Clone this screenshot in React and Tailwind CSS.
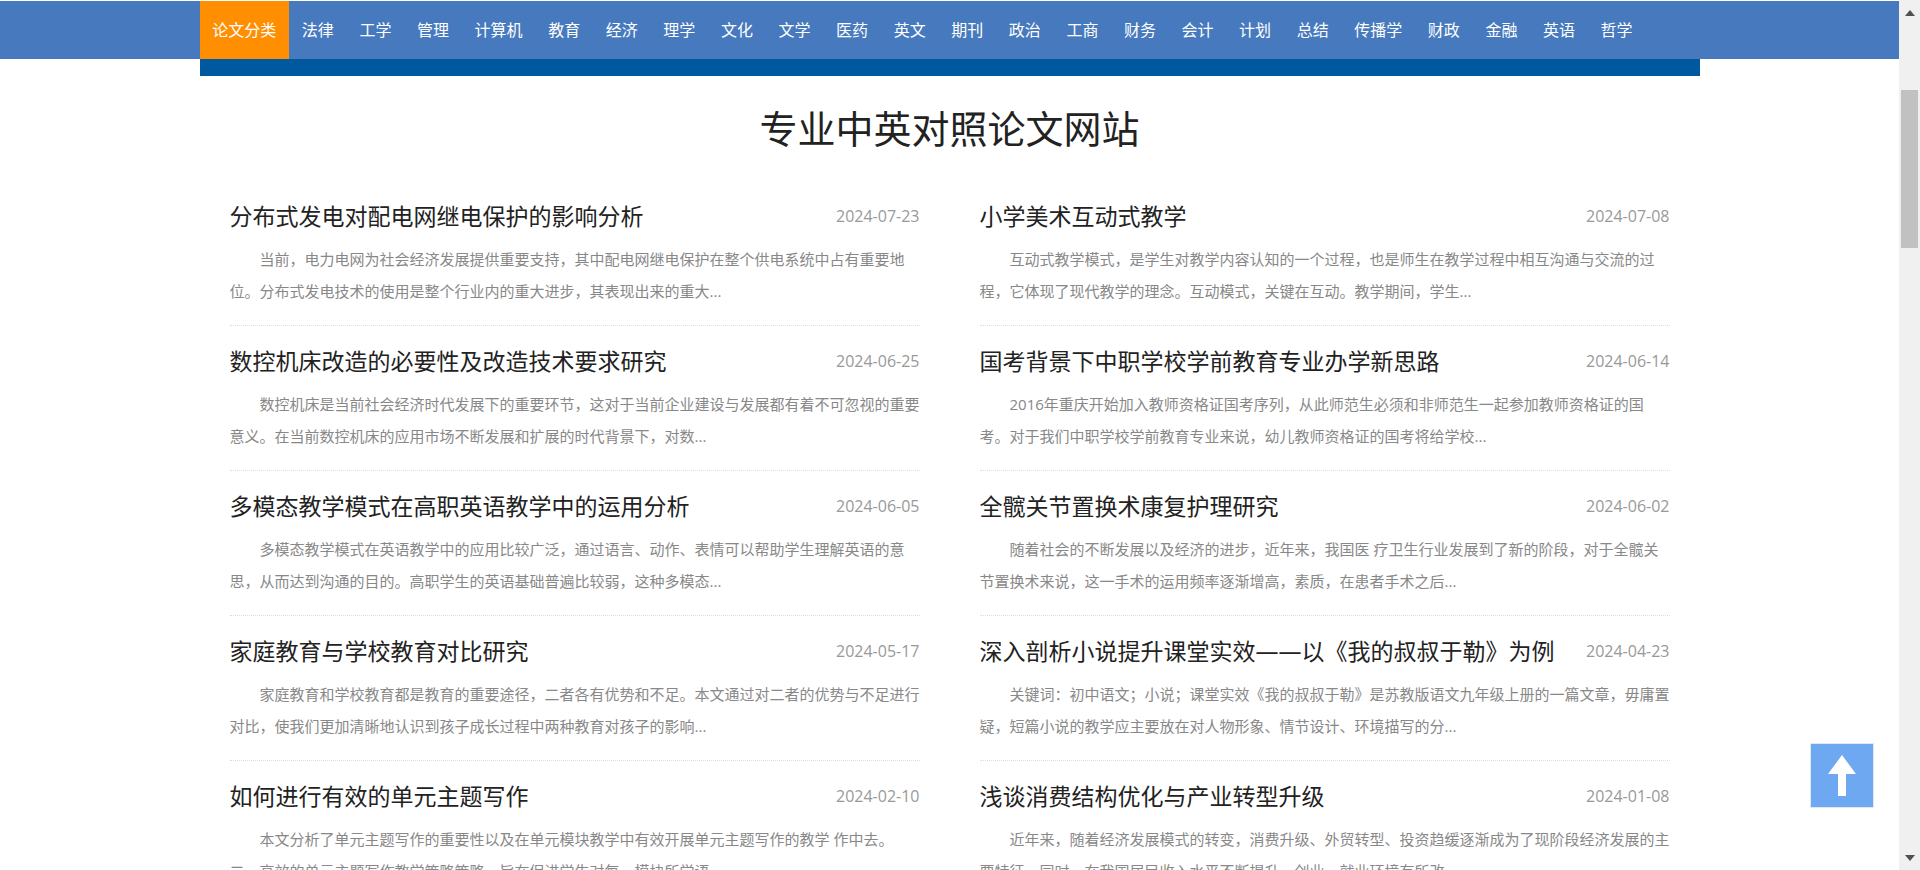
import React from 'react';
import clsx from 'clsx';

const categories = [
  '论文分类', '法律', '工学', '管理', '计算机', '教育', '经济', '理学', '文化', '文学', '医药', '英文',
  '期刊', '政治', '工商', '财务', '会计', '计划', '总结', '传播学', '财政', '金融', '英语', '哲学'
];

const articles = [
  {
    title: '分布式发电对配电网继电保护的影响分析',
    date: '2024-07-23',
    summary: '当前，电力电网为社会经济发展提供重要支持，其中配电网继电保护在整个供电系统中占有重要地位。分布式发电技术的使用是整个行业内的重大进步，其表现出来的重大...'
  },
  {
    title: '小学美术互动式教学',
    date: '2024-07-08',
    summary: '互动式教学模式，是学生对教学内容认知的一个过程，也是师生在教学过程中相互沟通与交流的过程，它体现了现代教学的理念。互动模式，关键在互动。教学期间，学生...'
  },
  {
    title: '数控机床改造的必要性及改造技术要求研究',
    date: '2024-06-25',
    summary: '数控机床是当前社会经济时代发展下的重要环节，这对于当前企业建设与发展都有着不可忽视的重要意义。在当前数控机床的应用市场不断发展和扩展的时代背景下，对数...'
  },
  {
    title: '国考背景下中职学校学前教育专业办学新思路',
    date: '2024-06-14',
    summary: '2016年重庆开始加入教师资格证国考序列，从此师范生必须和非师范生一起参加教师资格证的国考。对于我们中职学校学前教育专业来说，幼儿教师资格证的国考将给学校...'
  },
  {
    title: '多模态教学模式在高职英语教学中的运用分析',
    date: '2024-06-05',
    summary: '多模态教学模式在英语教学中的应用比较广泛，通过语言、动作、表情可以帮助学生理解英语的意思，从而达到沟通的目的。高职学生的英语基础普遍比较弱，这种多模态...'
  },
  {
    title: '全髋关节置换术康复护理研究',
    date: '2024-06-02',
    summary: '随着社会的不断发展以及经济的进步，近年来，我国医 疗卫生行业发展到了新的阶段，对于全髋关节置换术来说，这一手术的运用频率逐渐增高，素质，在患者手术之后...'
  },
  {
    title: '家庭教育与学校教育对比研究',
    date: '2024-05-17',
    summary: '家庭教育和学校教育都是教育的重要途径，二者各有优势和不足。本文通过对二者的优势与不足进行对比，使我们更加清晰地认识到孩子成长过程中两种教育对孩子的影响...'
  },
  {
    title: '深入剖析小说提升课堂实效——以《我的叔叔于勒》为例',
    date: '2024-04-23',
    summary: '关键词：初中语文；小说；课堂实效《我的叔叔于勒》是苏教版语文九年级上册的一篇文章，毋庸置疑，短篇小说的教学应主要放在对人物形象、情节设计、环境描写的分...'
  },
  {
    title: '如何进行有效的单元主题写作',
    date: '2024-02-10',
    summary: '本文分析了单元主题写作的重要性以及在单元模块教学中有效开展单元主题写作的教学 作中去。\n二、高效的单元主题写作教学策略策略，旨在促进学生对每一模块所学语...'
  },
  {
    title: '浅谈消费结构优化与产业转型升级',
    date: '2024-01-08',
    summary: '近年来，随着经济发展模式的转变，消费升级、外贸转型、投资趋缓逐渐成为了现阶段经济发展的主要特征。同时，在我国居民收入水平不断提升，创业、就业环境有所改...'
  }
];

const CategoryNav = () => (
  <nav className="mt-px bg-[#4679bd]">
    <ul className="mx-auto flex max-w-[1500px] pr-[54px]">
      {categories.map((name, index) => (
        <li key={name} className="flex-auto">
          <a
            href="#"
            className={clsx(
              'block whitespace-nowrap text-center text-base leading-[58px] text-white',
              index === 0 && 'bg-[#ff8e00]'
            )}
          >
            {name}
          </a>
        </li>
      ))}
    </ul>
  </nav>
);

const ArticleItem = ({ article }) => (
  <li className="border-b border-dotted border-[#dddddd] pt-3 pb-[18px]">
    <div className="mb-1 flex items-center justify-between">
      <h3 className="text-[23px] leading-[46px] text-[#222222]">
        <a href="#">{article.title}</a>
      </h3>
      <time dateTime={article.date} className="text-base text-[#999999]">
        {article.date}
      </time>
    </div>
    <p className="whitespace-pre-line indent-[2em] text-[15px] leading-8 text-[#888888]">
      {article.summary}
    </p>
  </li>
);

const ScrollBar = () => (
  <div className="flex w-[21px] shrink-0 flex-col items-center justify-between bg-[#f0f0f0]" aria-hidden="true">
    <svg className="mt-[10px] h-[6px] w-[10px]" viewBox="0 0 10 6">
      <path d="M5 0 L10 6 H0 Z" fill="#505050" />
    </svg>
    <div className="mb-auto mt-[74px] h-[158px] w-[17px] bg-[#c1c1c1]" />
    <svg className="mb-[9px] h-[6px] w-[10px]" viewBox="0 0 10 6">
      <path d="M0 0 H10 L5 6 Z" fill="#505050" />
    </svg>
  </div>
);

const App = () => {
  return (
    <div className="flex h-screen overflow-hidden bg-white font-['Open_Sans','Noto_Sans_CJK_SC',sans-serif]" lang="zh-CN">
      <div className="min-w-0 flex-1 overflow-hidden">
        <CategoryNav />

        <main className="mx-auto max-w-[1500px]">
          <div className="h-[17px] bg-[#00589f]" />
          <h2 className="pt-[22px] pb-[23px] text-center text-[38px] leading-[60px] text-[#222222]">专业中英对照论文网站</h2>
          <ul className="grid grid-cols-2 gap-x-[60px] px-[30px]">
            {articles.map((article) => (
              <ArticleItem key={article.title} article={article} />
            ))}
          </ul>
        </main>
      </div>

      {/* Back to top */}
      <button
        type="button"
        aria-label="返回顶部"
        className="fixed right-[46px] bottom-[62px] flex h-[65px] w-[64px] items-center justify-center border border-[#dfe8f5] bg-[#6ea8f1]"
      >
        <svg className="h-[41px] w-[28px]" viewBox="0 0 28 41">
          <path d="M14 0 L28 19 H18 V41 H10 V19 H0 Z" fill="#ffffff" />
        </svg>
      </button>

      <ScrollBar />
    </div>
  );
};

export default App;
